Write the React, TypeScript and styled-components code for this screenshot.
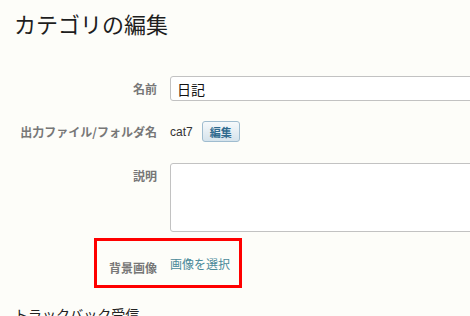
import React from "react";
import styled, { createGlobalStyle } from "styled-components";

const GlobalStyle = createGlobalStyle`
  body {
    margin: 0;
    background-color: #fdfdf9;
    font-family: "Liberation Sans", "Noto Sans CJK JP", sans-serif;
    color: #222;
  }
`;

function App() {
  return (
    <Page>
      <GlobalStyle />
      <Title>カテゴリの編集</Title>
      <Form>
        <Row $mt={37}>
          <Label>名前</Label>
          <TextInput defaultValue="日記" />
        </Row>
        <Row $mt={20}>
          <Label>出力ファイル/フォルダ名</Label>
          <Field>
            <Value>cat7</Value>
            <EditButton type="button">編集</EditButton>
          </Field>
        </Row>
        <Row $mt={21} $top>
          <Label $pt={4}>説明</Label>
          <TextArea />
        </Row>
        <Highlight>
          <HighlightLabel>背景画像</HighlightLabel>
          <SelectLink href="#">画像を選択</SelectLink>
        </Highlight>
      </Form>
      <SubTitle>トラックバック受信</SubTitle>
    </Page>
  );
}

export default App;

const Page = styled.div`
  width: 470px;
  height: 316px;
  overflow: hidden;
  padding: 8px 0 0 14px;
  box-sizing: border-box;
`;
const Title = styled.h1`
  margin: 0;
  font-size: 22px;
  line-height: 31px;
  font-weight: 400;
  color: #1e1e1e;
  font-family: "Noto Sans CJK JP", sans-serif;
`;
const Form = styled.div`
  display: flex;
  flex-direction: column;
  margin-left: -14px;
`;
const Row = styled.div<{ $mt: number; $top?: boolean }>`
  display: flex;
  align-items: ${(p) => (p.$top ? "flex-start" : "center")};
  gap: 13px;
  margin-top: ${(p) => p.$mt}px;
`;
const Label = styled.div<{ $pt?: number }>`
  width: 157px;
  flex-shrink: 0;
  text-align: right;
  font-size: 12px;
  font-weight: 700;
  color: #777;
  padding-top: ${(p) => p.$pt || 0}px;
  font-family: "Noto Sans CJK JP", sans-serif;
`;
const TextInput = styled.input`
  width: 330px;
  height: 25px;
  box-sizing: border-box;
  border: 1px solid #c2c2c2;
  border-radius: 3px;
  background: #fff;
  padding: 0 6px;
  font-size: 14px;
  color: #111;
  font-family: "Noto Sans CJK JP", sans-serif;
  flex-shrink: 0;
`;
const Field = styled.div`
  display: flex;
  align-items: center;
  gap: 9px;
`;
const Value = styled.span`
  font-size: 12px;
  color: #333;
  font-family: "Liberation Sans", sans-serif;
`;
const EditButton = styled.button`
  width: 38px;
  height: 21px;
  padding: 0;
  border: 1px solid #9fbccf;
  border-radius: 3px;
  background: linear-gradient(#f6f9fb, #d5e3ec);
  color: #2f6a8e;
  font-size: 11px;
  font-weight: 700;
  font-family: "Noto Sans CJK JP", sans-serif;
`;
const TextArea = styled.textarea`
  width: 330px;
  height: 69px;
  box-sizing: border-box;
  border: 1px solid #c2c2c2;
  border-radius: 3px;
  background: #fff;
  resize: none;
  flex-shrink: 0;
`;
const Highlight = styled.div`
  display: flex;
  align-items: center;
  margin: 6px 0 0 94px;
  width: 148px;
  height: 50px;
  box-sizing: border-box;
  border: 3px solid #f00;
`;
const HighlightLabel = styled.div`
  width: 60px;
  text-align: right;
  font-size: 12px;
  font-weight: 700;
  color: #777;
  margin-top: 8px;
  font-family: "Noto Sans CJK JP", sans-serif;
`;
const SelectLink = styled.a`
  margin-left: 13px;
  font-size: 12px;
  color: #4a8a99;
  text-decoration: none;
  font-family: "Noto Sans CJK JP", sans-serif;
`;
const SubTitle = styled.h2`
  margin: 16px 0 0;
  font-size: 14px;
  font-weight: 400;
  color: #222;
  font-family: "Noto Sans CJK JP", sans-serif;
`;
